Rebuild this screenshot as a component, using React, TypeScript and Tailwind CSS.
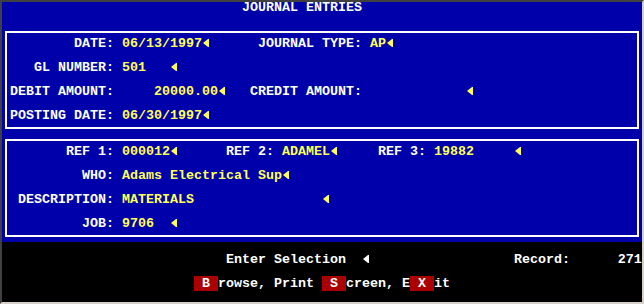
import React from 'react';

// DOS text-mode screen: 80 columns x 25 rows, 8x12 px cells
function Arrow({ color = '#ffff55' }: { color?: string }) {
  return (
    <svg width="8" height="12" viewBox="0 0 8 12" className="inline-block align-top">
      <path d="M1 5 L6 1 H7 V9 H6 Z" fill={color} />
    </svg>
  );
}

function Y({ children }: { children: React.ReactNode }) {
  return <span className="text-[#ffff55]">{children}</span>;
}

function Hot({ children }: { children: React.ReactNode }) {
  return <span className="bg-[#aa0000] text-white">{children}</span>;
}

function Row({ children }: { children?: React.ReactNode }) {
  return <div className="h-[12px] whitespace-pre">{children}</div>;
}

function Box({ children }: { children: React.ReactNode }) {
  return (
    <div className="mx-[3px] my-[5px] border-2 border-white px-[3px] py-[5px]">{children}</div>
  );
}

export default function App() {
  return (
    <div className="w-[644px] h-[304px] border-2 border-t-[#404040] border-l-[#404040] border-r-[#d4d0c8] border-b-[#d4d0c8] bg-black font-['Liberation_Mono',monospace] text-[13.333px] font-bold leading-[12px] text-white">
      {/* Blue form area: rows 0-19 */}
      <div className="flex flex-col bg-[#0000aa] h-[240px]">
        <Row>{'                              JOURNAL ENTRIES'}</Row>
        <Row />
        <Box>
          <Row>
            {'        DATE: '}
            <Y>06/13/1997</Y>
            <Arrow />
            {'      JOURNAL TYPE: '}
            <Y>AP</Y>
            <Arrow />
          </Row>
          <Row />
          <Row>
            {'   GL NUMBER: '}
            <Y>{'501   '}</Y>
            <Arrow />
          </Row>
          <Row />
          <Row>
            {'DEBIT AMOUNT: '}
            <Y>{'    20000.00'}</Y>
            <Arrow />
            {'   CREDIT AMOUNT:             '}
            <Arrow />
          </Row>
          <Row />
          <Row>
            {'POSTING DATE: '}
            <Y>06/30/1997</Y>
            <Arrow />
          </Row>
        </Box>
        <Box>
          <Row>
            {'       REF 1: '}
            <Y>000012</Y>
            <Arrow />
            {'      REF 2: '}
            <Y>ADAMEL</Y>
            <Arrow />
            {'     REF 3: '}
            <Y>{'19882     '}</Y>
            <Arrow />
          </Row>
          <Row />
          <Row>
            {'         WHO: '}
            <Y>Adams Electrical Sup</Y>
            <Arrow />
          </Row>
          <Row />
          <Row>
            {' DESCRIPTION: '}
            <Y>{'MATERIALS                '}</Y>
            <Arrow />
          </Row>
          <Row />
          <Row>
            {'         JOB: '}
            <Y>{'9706  '}</Y>
            <Arrow />
          </Row>
        </Box>
      </div>

      {/* Status area: rows 20-24 */}
      <div className="h-[60px]">
        <Row />
        <Row>
          {'                            Enter Selection  '}
          <Arrow color="#ffffff" />
          {'                  Record:      271'}
        </Row>
        <Row />
        <Row>
          {'                        '}
          <Hot>{' B '}</Hot>
          {'rowse, Print '}
          <Hot>{' S '}</Hot>
          {'creen, E'}
          <Hot>{' X '}</Hot>
          {'it'}
        </Row>
        <Row />
      </div>
    </div>
  );
}
